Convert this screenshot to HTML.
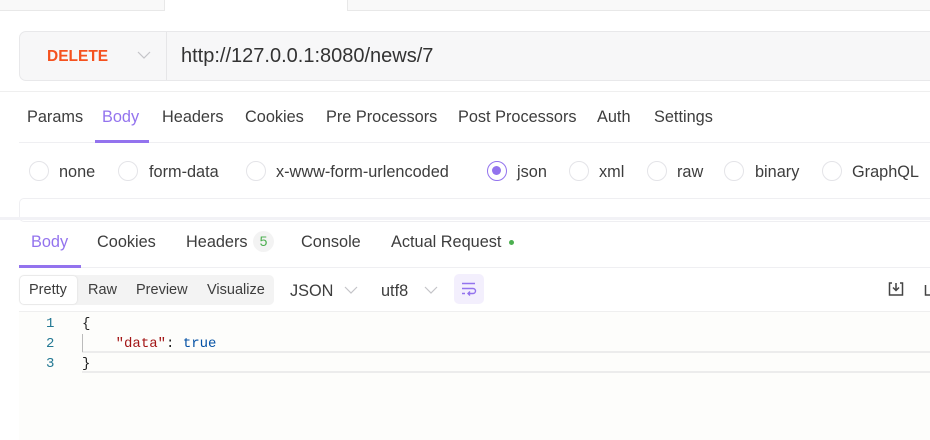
<!DOCTYPE html>
<html><head><meta charset="utf-8"><style>
*{margin:0;padding:0;box-sizing:border-box}
body{width:930px;height:440px;overflow:hidden;background:#fff;font-family:"Liberation Sans",sans-serif;color:#3d3d3d;position:relative}
.a{position:absolute;white-space:nowrap}
.t{font-size:16.3px;line-height:20px}
.rad{position:absolute;width:20px;height:20px;border:1px solid #e4e4e8;border-radius:50%;background:#fff}
.mono{font-family:"Liberation Mono",monospace;font-size:14px}
</style></head><body>
<div class="a" style="left:0;top:0;width:165px;height:11px;background:#f9f9f9;border-bottom:1px solid #e8e8e8;border-right:1px solid #e8e8e8"></div>
<div class="a" style="left:347px;top:0;width:583px;height:11px;background:#f9f9f9;border-bottom:1px solid #e8e8e8;border-left:1px solid #e8e8e8"></div>

<div class="a" style="left:19px;top:31px;width:920px;height:50px;background:#f7f7f8;border:1px solid #e8e8ea;border-radius:7px"></div>
<div class="a" style="left:166px;top:32px;width:1px;height:48px;background:#e6e6e8"></div>
<div class="a" style="left:47px;top:47px;font-size:15.5px;font-weight:bold;color:#f5521f;line-height:20px">DELETE</div>
<svg class="a" style="left:137px;top:50px" width="14" height="10"><path d="M1 2l6 6 6-6" fill="none" stroke="#c4c4c8" stroke-width="1.2"/></svg>
<div class="a" style="left:181px;top:45px;font-size:20px;line-height:22px;color:#333">http://127.0.0.1:8080/news/7</div>
<div class="a" style="left:0;top:91px;width:930px;height:1px;background:#efefef"></div>

<div class="a t" style="left:27px;top:107px">Params</div>
<div class="a t" style="left:102px;top:107px;color:#9373ee">Body</div>
<div class="a t" style="left:162px;top:107px">Headers</div>
<div class="a t" style="left:245px;top:107px">Cookies</div>
<div class="a t" style="left:326px;top:107px">Pre Processors</div>
<div class="a t" style="left:458px;top:107px">Post Processors</div>
<div class="a t" style="left:597px;top:107px">Auth</div>
<div class="a t" style="left:654px;top:107px">Settings</div>
<div class="a" style="left:19px;top:142px;width:911px;height:1px;background:#efeff2"></div>
<div class="a" style="left:95px;top:140px;width:54px;height:3px;background:#9373ee"></div>

<div class="rad" style="left:29px;top:161px"></div><div class="a t" style="left:59px;top:162px">none</div>
<div class="rad" style="left:118px;top:161px"></div><div class="a t" style="left:149px;top:162px">form-data</div>
<div class="rad" style="left:246px;top:161px"></div><div class="a t" style="left:276px;top:162px">x-www-form-urlencoded</div>
<div class="rad" style="left:487px;top:161px;border:1.5px solid #9373ee"><div style="position:absolute;left:4px;top:4px;width:9px;height:9px;border-radius:50%;background:#9373ee"></div></div><div class="a t" style="left:517px;top:162px">json</div>
<div class="rad" style="left:569px;top:161px"></div><div class="a t" style="left:599px;top:162px">xml</div>
<div class="rad" style="left:647px;top:161px"></div><div class="a t" style="left:677px;top:162px">raw</div>
<div class="rad" style="left:724px;top:161px"></div><div class="a t" style="left:755px;top:162px">binary</div>
<div class="rad" style="left:822px;top:161px"></div><div class="a t" style="left:852px;top:162px">GraphQL</div>

<div class="a" style="left:19px;top:198px;width:920px;height:24px;border:1px solid #efeff2;border-radius:5px"></div>
<div class="a" style="left:0;top:217px;width:930px;height:3px;background:#f2f2f6"></div>

<div class="a t" style="left:31px;top:232px;color:#9373ee">Body</div>
<div class="a t" style="left:97px;top:232px">Cookies</div>
<div class="a t" style="left:186px;top:232px">Headers</div>
<div class="a" style="left:253px;top:231px;width:21px;height:21px;border-radius:50%;background:#f3f3f3;color:#4caf50;font-size:14px;line-height:21px;text-align:center">5</div>
<div class="a t" style="left:301px;top:232px">Console</div>
<div class="a t" style="left:391px;top:232px">Actual Request</div>
<div class="a" style="left:509px;top:240px;width:5px;height:5px;border-radius:50%;background:#4caf50"></div>
<div class="a" style="left:19px;top:267px;width:911px;height:1px;background:#efeff2"></div>
<div class="a" style="left:19px;top:265px;width:62px;height:3px;background:#9373ee"></div>

<div class="a" style="left:19px;top:275px;width:255px;height:30px;background:#f3f3f3;border-radius:5px"></div>
<div class="a" style="left:20px;top:276px;width:57px;height:28px;background:#fff;border-radius:4px;box-shadow:0 0 2px rgba(0,0,0,.12)"></div>
<div class="a" style="left:29px;top:281px;font-size:14.5px;line-height:18px">Pretty</div>
<div class="a" style="left:88px;top:281px;font-size:14.5px;line-height:18px">Raw</div>
<div class="a" style="left:136px;top:281px;font-size:14.5px;line-height:18px">Preview</div>
<div class="a" style="left:207px;top:281px;font-size:14.5px;line-height:18px">Visualize</div>
<div class="a t" style="left:290px;top:281px">JSON</div>
<svg class="a" style="left:344px;top:285px" width="14" height="10"><path d="M1 2l6 6 6-6" fill="none" stroke="#c4c4c8" stroke-width="1.2"/></svg>
<div class="a t" style="left:381px;top:281px">utf8</div>
<svg class="a" style="left:424px;top:285px" width="14" height="10"><path d="M1 2l6 6 6-6" fill="none" stroke="#c4c4c8" stroke-width="1.2"/></svg>
<div class="a" style="left:454px;top:274px;width:30px;height:30px;background:#f3effd;border-radius:5px"></div>
<svg class="a" style="left:461px;top:282px" width="16" height="14"><path d="M1 1.5h13M1 6.5h11a2.5 2.5 0 0 1 0 5H7M9 9.5l-2 2 2 2M1 11.5h3" fill="none" stroke="#9373ee" stroke-width="1.4"/></svg>
<svg class="a" style="left:888px;top:281px" width="16" height="16"><path d="M4 2H1.5v12h13V2H12M8 2v7M5 6.5l3 3 3-3" fill="none" stroke="#444" stroke-width="1.5"/></svg>
<svg class="a" style="left:924px;top:281px" width="6" height="16"><path d="M1.5 4v10h6" fill="none" stroke="#444" stroke-width="1.5"/></svg>
<div class="a" style="left:19px;top:311px;width:911px;height:1px;background:#efefef"></div>
<div class="a" style="left:19px;top:312px;width:911px;height:128px;background:#fdfdfb"></div>
<div class="a" style="left:82px;top:351px;width:848px;height:2px;background:#ececec"></div>
<div class="a" style="left:82px;top:371px;width:848px;height:2px;background:#ececec"></div>
<div class="a" style="left:82px;top:334px;width:1px;height:18px;background:#bbb"></div>
<div class="a mono" style="left:46px;top:314px;line-height:20px;color:#237893">1<br>2<br>3</div>
<div class="a mono" style="left:82px;top:314px;line-height:20px;color:#222">{<br>&nbsp;&nbsp;&nbsp;&nbsp;<span style="color:#a31515">"data"</span>: <span style="color:#0451a5">true</span><br>}</div>
</body></html>
